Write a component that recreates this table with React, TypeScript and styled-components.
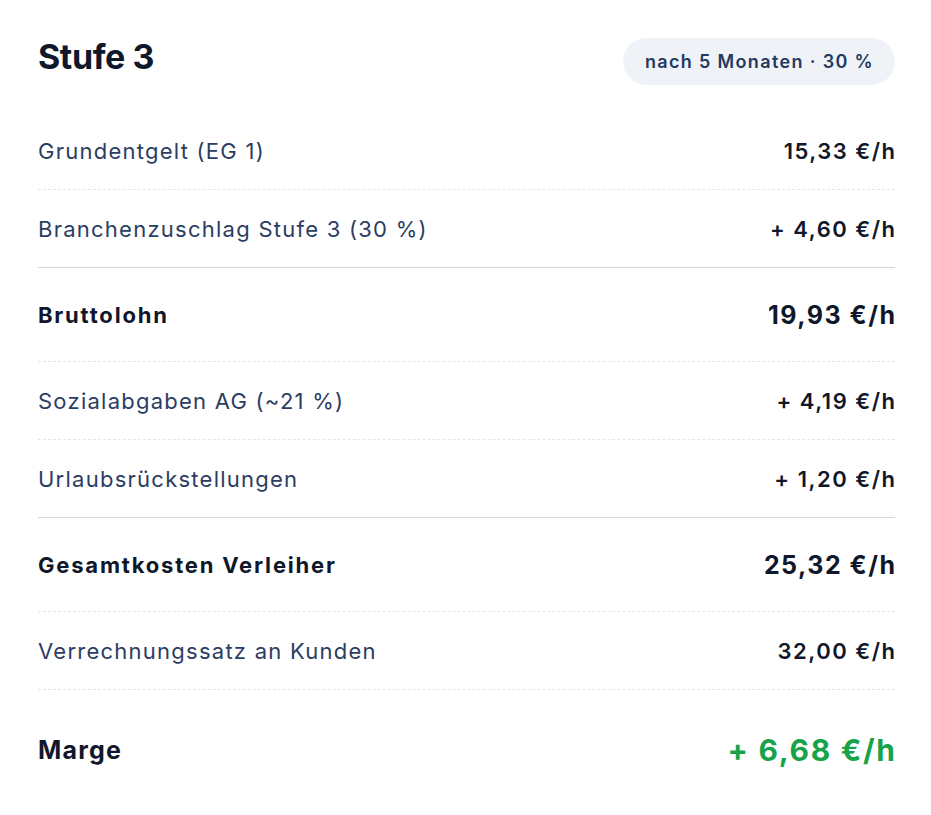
import React from "react";
import styled, { createGlobalStyle } from "styled-components";

const Global = createGlobalStyle`
  html, body { margin: 0; padding: 0; background: #ffffff; }
  body { font-family: Inter, "Noto Sans", "Liberation Sans", sans-serif; -webkit-font-smoothing: antialiased; }
  * { box-sizing: border-box; }
`;

const Card = styled.div`
  padding: 38px 36px 0 38px;
  width: 931px;
`;

const Header = styled.div`
  display: flex;
  justify-content: space-between;
  align-items: flex-start;
  margin-bottom: 27px;
`;

const Title = styled.h2`
  margin: 0;
  font-size: 34px;
  line-height: 38px;
  font-weight: 700;
  letter-spacing: -0.4px;
  color: #0f172a;
`;

const Badge = styled.span`
  display: inline-flex;
  align-items: center;
  height: 47px;
  padding: 0 21px 0 22px;
  border-radius: 24px;
  background: #eff3f8;
  color: #233a5e;
  font-size: 18px;
  font-weight: 600;
  letter-spacing: 1.35px;
`;

type Divider = "dashed" | "solid" | "none";
type Kind = "normal" | "strong" | "total";

const Row = styled.div<{ $divider: Divider; $kind: Kind }>`
  display: flex;
  justify-content: space-between;
  align-items: center;
  height: ${(p) => (p.$kind === "normal" ? 78 : p.$kind === "strong" ? 94 : 120)}px;
  border-bottom: ${(p) =>
    p.$divider === "dashed"
      ? "1px dashed #e3e7ed"
      : p.$divider === "solid"
      ? "1px solid #cfd6df"
      : "none"};
`;

const Label = styled.span<{ $kind: Kind }>`
  font-size: ${(p) => (p.$kind === "total" ? 25 : 22)}px;
  font-weight: ${(p) => (p.$kind === "normal" ? 400 : 700)};
  color: ${(p) => (p.$kind === "normal" ? "#2b3d62" : "#0f172a")};
  letter-spacing: ${(p) => (p.$kind === "normal" ? 1.25 : p.$kind === "strong" ? 1.8 : 1.2)}px;
`;

const Value = styled.span<{ $kind: Kind; $positive?: boolean }>`
  font-size: ${(p) => (p.$kind === "total" ? 30 : p.$kind === "strong" ? 25 : 22)}px;
  font-weight: ${(p) => (p.$kind === "normal" ? 600 : 700)};
  color: ${(p) => (p.$positive ? "#16a34a" : "#0f172a")};
  letter-spacing: ${(p) => (p.$kind === "total" ? 1.7 : 1.5)}px;
  margin-right: ${(p) => (p.$kind === "total" ? -1.7 : -1.5)}px;
`;

const rows: { label: string; value: string; kind: Kind; divider: Divider; positive?: boolean }[] = [
  { label: "Grundentgelt (EG 1)", value: "15,33 €/h", kind: "normal", divider: "dashed" },
  { label: "Branchenzuschlag Stufe 3 (30 %)", value: "+ 4,60 €/h", kind: "normal", divider: "solid" },
  { label: "Bruttolohn", value: "19,93 €/h", kind: "strong", divider: "dashed" },
  { label: "Sozialabgaben AG (~21 %)", value: "+ 4,19 €/h", kind: "normal", divider: "dashed" },
  { label: "Urlaubsrückstellungen", value: "+ 1,20 €/h", kind: "normal", divider: "solid" },
  { label: "Gesamtkosten Verleiher", value: "25,32 €/h", kind: "strong", divider: "dashed" },
  { label: "Verrechnungssatz an Kunden", value: "32,00 €/h", kind: "normal", divider: "dashed" },
  { label: "Marge", value: "+ 6,68 €/h", kind: "total", divider: "none", positive: true },
];

export default function App() {
  return (
    <>
      <Global />
      <Card>
        <Header>
          <Title>Stufe 3</Title>
          <Badge>nach 5 Monaten · 30 %</Badge>
        </Header>
        {rows.map((r) => (
          <Row key={r.label} $divider={r.divider} $kind={r.kind}>
            <Label $kind={r.kind}>{r.label}</Label>
            <Value $kind={r.kind} $positive={r.positive}>
              {r.value}
            </Value>
          </Row>
        ))}
      </Card>
    </>
  );
}
